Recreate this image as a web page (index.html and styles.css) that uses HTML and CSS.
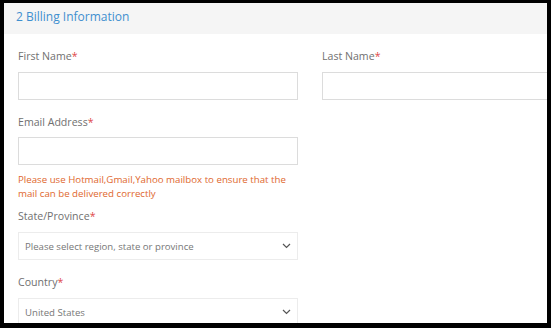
FILE: index.html
```html
<!DOCTYPE html>
<html lang="en">
<head>
    <meta charset="UTF-8">
    <title>Billing Information</title>
    <link rel="stylesheet" href="styles.css">
</head>
<body>
    <div class="frame">
        <div class="section-head">2 Billing Information</div>
        <form class="billing">
            <div class="row">
                <div class="field">
                    <label>First Name<span class="req">*</span></label>
                    <input type="text" class="box">
                </div>
                <div class="field">
                    <label>Last Name<span class="req">*</span></label>
                    <input type="text" class="box">
                </div>
            </div>
            <div class="field email">
                <label>Email Address<span class="req">*</span></label>
                <input type="text" class="box">
                <p class="note">Please use Hotmail,Gmail,Yahoo mailbox to ensure that the mail can be delivered correctly</p>
            </div>
            <div class="field">
                <label>State/Province<span class="req">*</span></label>
                <div class="box select">
                    <span class="placeholder">Please select region, state or province</span>
                    <svg width="9" height="6" viewBox="0 0 9 6"><path d="M1 1l3.5 3.5L8 1" fill="none" stroke="#555" stroke-width="1.2"/></svg>
                </div>
            </div>
            <div class="field">
                <label>Country<span class="req">*</span></label>
                <div class="box select">
                    <span class="value">United States</span>
                    <svg width="9" height="6" viewBox="0 0 9 6"><path d="M1 1l3.5 3.5L8 1" fill="none" stroke="#555" stroke-width="1.2"/></svg>
                </div>
            </div>
        </form>
    </div>
</body>
</html>
```

FILE: styles.css
```css
body {
    margin: 0;
    background: #000;
    font-family: "Open Sans", Arial, sans-serif;
}
.frame {
    margin: 3px 0 0 4px;
    width: 543px;
    height: 320px;
    background: #fff;
    overflow: hidden;
}
.section-head {
    height: 31px;
    line-height: 28px;
    padding-left: 12px;
    background: #f5f5f5;
    color: #3f8fcf;
    font-size: 12px;
}
.billing {
    padding: 15px 0 0 14px;
}
.row {
    display: flex;
    gap: 24px;
}
.field {
    width: 280px;
    flex-shrink: 0;
    margin-bottom: 15px;
}
label {
    display: block;
    font-size: 10.6px;
    line-height: 14px;
    color: #707070;
    margin-bottom: 9px;
}
.email label {
    margin-bottom: 8px;
}
.req {
    color: #e04848;
}
.box {
    box-sizing: border-box;
    display: block;
    width: 280px;
    height: 28px;
    margin: 0;
    border: 1px solid #dcdcdc;
    background: #fff;
    font-family: inherit;
}
.select {
    display: flex;
    align-items: center;
    justify-content: space-between;
    padding: 0 6px 0 6px;
    font-size: 9.6px;
    color: #777;
    border-color: #ececec;
}
.note {
    margin: 8px 0 -7px;
    font-size: 9.7px;
    line-height: 14px;
    color: #e0672e;
}
```
